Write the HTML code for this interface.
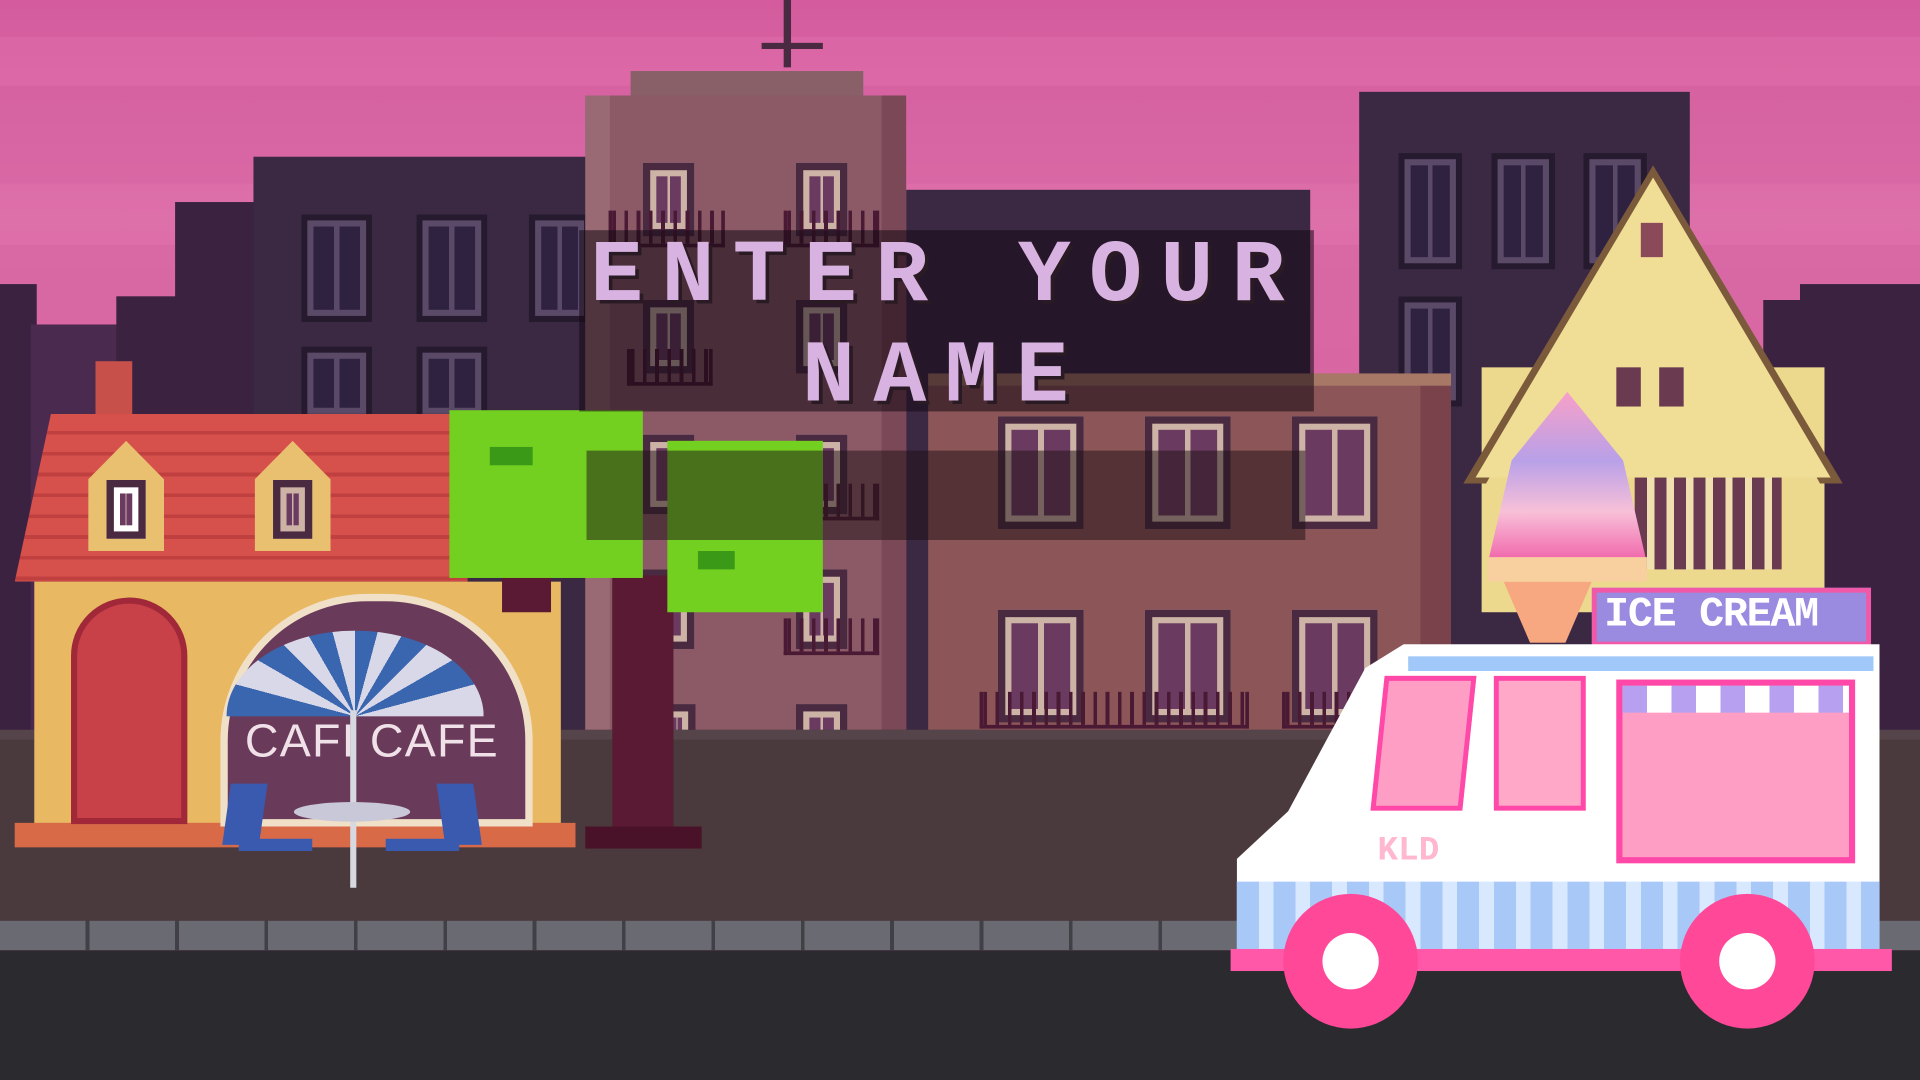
<!DOCTYPE html>
<html><head><meta charset="utf-8"><style>
html,body{margin:0;padding:0;width:1920px;height:1080px;overflow:hidden;background:#2a2a2e}
#s{position:absolute;left:0;top:0;width:1568px;height:882px;transform:scale(1.22449);transform-origin:0 0;overflow:hidden;
background:linear-gradient(#d45c9e 0%,#d96aa6 20%,#d763a0 45%,#cf5a98 70%)}
#s div{position:absolute}
.w{background:#cdb3a6;border:6px solid #4a2a40;box-sizing:border-box}
.w::before{content:"";position:absolute;left:5px;top:5px;right:5px;bottom:5px;background:linear-gradient(90deg,#6a3a60 45%,#cdb3a6 45%,#cdb3a6 55%,#6a3a60 55%)}
.dw{background:#5a4a68;border:5px solid #261a2e;box-sizing:border-box}
.dw::before{content:"";position:absolute;left:5px;top:5px;right:5px;bottom:5px;background:linear-gradient(90deg,#2e2240 44%,#5a4a68 44%,#5a4a68 56%,#2e2240 56%)}
.rail{height:30px;border:3px solid #4a1a34;border-top:none;box-sizing:border-box;background:repeating-linear-gradient(90deg,#4a1a34 0 3px,transparent 3px 10px)}
.t{font-family:"Liberation Mono",monospace;font-weight:bold;color:#d8b2e0;font-size:72px;letter-spacing:15px;text-shadow:3px 3px 0 #2a1a24;line-height:1;white-space:nowrap}
</style></head><body><div id="s">
<div style="left:0;top:30px;width:1568px;height:40px;background:rgba(255,150,200,.15)"></div>
<div style="left:0;top:150px;width:1568px;height:50px;background:rgba(255,150,200,.12)"></div>
<!-- far left dark buildings -->
<div style="left:0;top:232px;width:30px;height:380px;background:#3a2240"></div>
<div style="left:25px;top:265px;width:90px;height:350px;background:#4a2a4e"></div>
<div style="left:95px;top:242px;width:50px;height:370px;background:#3a2240"></div>
<div style="left:143px;top:165px;width:70px;height:450px;background:#3a2240"></div>
<div style="left:207px;top:128px;width:280px;height:480px;background:#3b2843"></div>
<div class="dw" style="left:246px;top:175px;width:58px;height:88px"></div>
<div class="dw" style="left:340px;top:175px;width:58px;height:88px"></div>
<div class="dw" style="left:432px;top:175px;width:50px;height:88px"></div>
<div class="dw" style="left:246px;top:283px;width:58px;height:60px"></div>
<div class="dw" style="left:340px;top:283px;width:58px;height:60px"></div>
<!-- right dark buildings -->
<div style="left:740px;top:155px;width:330px;height:450px;background:#3b2843"></div>
<div style="left:1110px;top:75px;width:270px;height:530px;background:#3b2843"></div>
<div class="dw" style="left:1142px;top:125px;width:52px;height:95px"></div>
<div class="dw" style="left:1218px;top:125px;width:52px;height:95px"></div>
<div class="dw" style="left:1293px;top:125px;width:52px;height:95px"></div>
<div class="dw" style="left:1142px;top:242px;width:52px;height:90px"></div>
<div style="left:1440px;top:245px;width:40px;height:360px;background:#3a2240"></div>
<div style="left:1470px;top:232px;width:98px;height:380px;background:#3a2240"></div>
<!-- central tall building -->
<div style="left:640px;top:0;width:6px;height:55px;background:#4a2a40"></div>
<div style="left:622px;top:35px;width:50px;height:5px;background:#4a2a40"></div>
<div style="left:515px;top:58px;width:190px;height:25px;background:#8a6068"></div>
<div style="left:478px;top:78px;width:262px;height:612px;background:#8b5a66"></div>
<div style="left:478px;top:78px;width:20px;height:612px;background:#9a6a74"></div>
<div style="left:720px;top:78px;width:20px;height:612px;background:#7a4856"></div>
<div class="w" style="left:525px;top:133px;width:42px;height:60px"></div>
<div class="w" style="left:650px;top:133px;width:42px;height:60px"></div>
<div class="w" style="left:525px;top:245px;width:42px;height:60px"></div>
<div class="w" style="left:650px;top:245px;width:42px;height:60px"></div>
<div class="w" style="left:525px;top:355px;width:42px;height:65px"></div>
<div class="w" style="left:650px;top:355px;width:42px;height:65px"></div>
<div class="w" style="left:525px;top:465px;width:42px;height:65px"></div>
<div class="w" style="left:650px;top:465px;width:42px;height:65px"></div>
<div class="w" style="left:538px;top:575px;width:30px;height:65px"></div>
<div class="w" style="left:650px;top:575px;width:42px;height:65px"></div>
<div class="rail" style="left:497px;top:172px;width:95px"></div>
<div class="rail" style="left:640px;top:172px;width:78px"></div>
<div class="rail" style="left:512px;top:285px;width:70px"></div>
<div class="rail" style="left:640px;top:395px;width:78px"></div>
<div class="rail" style="left:640px;top:505px;width:78px"></div>
<!-- brown building right -->
<div style="left:758px;top:305px;width:427px;height:385px;background:#8c5558"></div>
<div style="left:1160px;top:305px;width:25px;height:385px;background:#7a434c"></div>
<div style="left:758px;top:305px;width:427px;height:10px;background:#a87866"></div>
<div class="w" style="left:815px;top:340px;width:70px;height:92px"></div>
<div class="w" style="left:935px;top:340px;width:70px;height:92px"></div>
<div class="w" style="left:1055px;top:340px;width:70px;height:92px"></div>
<div class="w" style="left:815px;top:498px;width:70px;height:92px"></div>
<div class="w" style="left:935px;top:498px;width:70px;height:92px"></div>
<div class="w" style="left:1055px;top:498px;width:70px;height:92px"></div>
<div class="rail" style="left:800px;top:565px;width:220px"></div>
<div class="rail" style="left:1047px;top:565px;width:90px"></div>
<!-- yellow house -->
<div style="left:1210px;top:300px;width:280px;height:200px;background:#ecd98e"></div>
<div style="left:1195px;top:135px;width:310px;height:260px;background:#7a5a3a;clip-path:polygon(50% 0,100% 100%,94% 100%,50% 6%,6% 100%,0 100%)"></div>
<div style="left:1205px;top:145px;width:290px;height:245px;background:#f0de96;clip-path:polygon(50% 0,100% 100%,0 100%)"></div>
<div style="left:1320px;top:300px;width:20px;height:32px;background:#6a3a50"></div>
<div style="left:1355px;top:300px;width:20px;height:32px;background:#6a3a50"></div>
<div style="left:1340px;top:182px;width:18px;height:28px;background:#8a4a5a"></div>
<div style="left:1335px;top:390px;width:120px;height:75px;background:repeating-linear-gradient(90deg,#6a3a50 0 10px,#f0e0b0 10px 16px)"></div>
<!-- ground -->
<div style="left:0;top:596px;width:1568px;height:160px;background:#4a3a3e"></div>
<div style="left:0;top:596px;width:1568px;height:8px;background:#55444a"></div>
<div style="left:0;top:752px;width:1568px;height:24px;background:repeating-linear-gradient(90deg,#6a6a72 0 70px,#404046 70px 73px)"></div>
<div style="left:0;top:776px;width:1568px;height:106px;background:#2b2a2f"></div>
<!-- cafe house -->
<div style="left:78px;top:295px;width:30px;height:45px;background:#c8504a"></div>
<div style="left:12px;top:338px;width:370px;height:137px;background:repeating-linear-gradient(#d6504c 0 14px,#c04040 14px 17px);clip-path:polygon(8% 0,100% 0,100% 100%,0 100%)"></div>
<div style="left:72px;top:360px;width:62px;height:90px;background:#e8c070;clip-path:polygon(50% 0,100% 35%,100% 100%,0 100%,0 35%)"></div>
<div class="w" style="left:87px;top:392px;width:32px;height:48px;background:#fff"></div>
<div style="left:208px;top:360px;width:62px;height:90px;background:#e8c070;clip-path:polygon(50% 0,100% 35%,100% 100%,0 100%,0 35%)"></div>
<div class="w" style="left:223px;top:392px;width:32px;height:48px"></div>
<div style="left:28px;top:475px;width:430px;height:200px;background:#e8b862"></div>
<div style="left:12px;top:672px;width:458px;height:20px;background:#d86a48"></div>
<div style="left:58px;top:488px;width:95px;height:185px;background:#c84048;border-radius:48px 48px 0 0;border:5px solid #a02838;box-sizing:border-box"></div>
<div style="left:180px;top:485px;width:255px;height:190px;background:#6a3a5a;border-radius:120px 120px 0 0;border:6px solid #f0e0c8;box-sizing:border-box"></div>
<div style="left:200px;top:585px;font:38px 'Liberation Sans',sans-serif;color:#f0e0e8;letter-spacing:1px">CAFI CAFE</div>
<!-- umbrella + chairs -->
<div style="left:185px;top:515px;width:210px;height:70px;background:repeating-conic-gradient(from 0deg at 50% 100%,#3a66b0 0 15deg,#d8d8e8 15deg 30deg);clip-path:ellipse(50% 100% at 50% 100%)"></div>
<div style="left:286px;top:580px;width:5px;height:145px;background:#d8d8e0"></div>
<div style="left:240px;top:655px;width:95px;height:16px;background:#c8c8d8;border-radius:50%"></div>
<div style="left:185px;top:640px;width:30px;height:50px;background:#3a5ab0;transform:skewX(-8deg)"></div>
<div style="left:195px;top:685px;width:60px;height:10px;background:#3a5ab0"></div>
<div style="left:360px;top:640px;width:30px;height:50px;background:#3a5ab0;transform:skewX(8deg)"></div>
<div style="left:315px;top:685px;width:60px;height:10px;background:#3a5ab0"></div>
<!-- tree -->
<div style="left:500px;top:470px;width:50px;height:222px;background:#5a1a34"></div>
<div style="left:478px;top:675px;width:95px;height:18px;background:#4a1228"></div>
<div style="left:410px;top:470px;width:40px;height:30px;background:#5a1a34"></div>
<div style="left:367px;top:335px;width:158px;height:137px;background:#74d020"></div>
<div style="left:400px;top:365px;width:35px;height:15px;background:#3a9a18"></div>
<div style="left:545px;top:360px;width:127px;height:140px;background:#74d020"></div>
<div style="left:570px;top:450px;width:30px;height:15px;background:#3a9a18"></div>
<!-- title box and input -->
<div style="left:473px;top:188px;width:600px;height:148px;background:rgba(20,10,20,.55)"></div>
<div class="t" style="left:482px;top:190px">ENTER YOUR</div>
<div class="t" style="left:655px;top:272px">NAME</div>
<div style="left:479px;top:368px;width:587px;height:73px;background:rgba(30,15,20,.5)"></div>
<!-- ice cream truck -->
<div style="left:1215px;top:320px;width:130px;height:140px;background:linear-gradient(#f8a0c8,#b8a0e8 40%,#f8c0d8 70%,#f060a8);clip-path:polygon(50% 0,85% 40%,100% 100%,0 100%,15% 40%)"></div>
<div style="left:1215px;top:455px;width:130px;height:20px;background:#f8d0a0"></div>
<div style="left:1228px;top:475px;width:72px;height:50px;background:#f8a880;clip-path:polygon(0 0,100% 0,70% 100%,30% 100%)"></div>
<div style="left:1300px;top:480px;width:228px;height:48px;background:#9a8ae0;border:4px solid #f058a8;box-sizing:border-box"></div>
<div style="left:1310px;top:484px;font:bold 34px 'Liberation Mono',monospace;color:#fff;letter-spacing:-1px">ICE CREAM</div>
<div style="left:1010px;top:526px;width:525px;height:195px;background:#fff;clip-path:polygon(26% 0,100% 0,100% 100%,0 100%,0 90%,8% 70%,20% 10%)"></div>
<div style="left:1150px;top:536px;width:380px;height:12px;background:#a0c8f8"></div>
<div style="left:1125px;top:552px;width:75px;height:110px;background:#ff9ec4;border:4px solid #ff48a8;box-sizing:border-box;transform:skewX(-6deg)"></div>
<div style="left:1220px;top:552px;width:75px;height:110px;background:#ffa8c8;border:4px solid #ff48a8;box-sizing:border-box"></div>
<div style="left:1320px;top:555px;width:195px;height:150px;background:#ff9ec4;border:5px solid #ff48a8;box-sizing:border-box"></div>
<div style="left:1325px;top:560px;width:185px;height:22px;background:repeating-linear-gradient(90deg,#b8a0f0 0 20px,#fff 20px 40px)"></div>
<div style="left:1125px;top:680px;font:bold 28px 'Liberation Mono',monospace;color:#ffb8d0">KLD</div>
<div style="left:1010px;top:720px;width:525px;height:58px;background:repeating-linear-gradient(90deg,#a8c8f8 0 18px,#d8e8ff 18px 30px)"></div>
<div style="left:1005px;top:775px;width:540px;height:18px;background:#ff58a8"></div>
<div style="left:1048px;top:730px;width:110px;height:110px;background:#ff4898;border-radius:50%"></div>
<div style="left:1080px;top:762px;width:46px;height:46px;background:#fff;border-radius:50%"></div>
<div style="left:1372px;top:730px;width:110px;height:110px;background:#ff4898;border-radius:50%"></div>
<div style="left:1404px;top:762px;width:46px;height:46px;background:#fff;border-radius:50%"></div>
</div></body></html>
